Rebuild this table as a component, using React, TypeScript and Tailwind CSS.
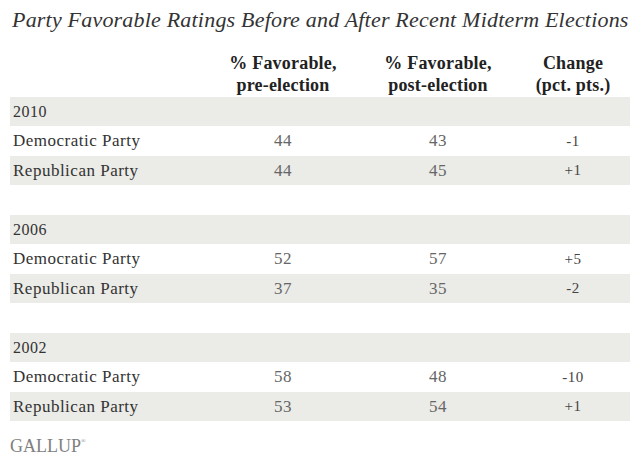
const serif = { fontFamily: '"Liberation Serif", "Times New Roman", serif' };

type Row = { party: string; pre: number; post: number; change: string };
type Section = { year: string; rows: Row[] };

const sections: Section[] = [
  {
    year: '2010',
    rows: [
      { party: 'Democratic Party', pre: 44, post: 43, change: '-1' },
      { party: 'Republican Party', pre: 44, post: 45, change: '+1' },
    ],
  },
  {
    year: '2006',
    rows: [
      { party: 'Democratic Party', pre: 52, post: 57, change: '+5' },
      { party: 'Republican Party', pre: 37, post: 35, change: '-2' },
    ],
  },
  {
    year: '2002',
    rows: [
      { party: 'Democratic Party', pre: 58, post: 48, change: '-10' },
      { party: 'Republican Party', pre: 53, post: 54, change: '+1' },
    ],
  },
];

const cols = 'grid grid-cols-[200px_146px_164px_106px_4px]';

const App = () => {
  return (
    <div className="w-[640px] h-[467px] bg-white overflow-hidden" style={serif}>
      <h1 className="pl-[12px] pt-[6px] text-[22px] italic leading-[27px] tracking-[0.2px] text-[#333]">
        Party Favorable Ratings Before and After Recent Midterm Elections
      </h1>

      <div className="ml-[10px] w-[620px] mt-[19px]">
        <div className={`${cols} h-[45px] text-[18px] font-bold leading-[22px] tracking-[0.2px] text-[#222]`}>
          <div />
          <div className="text-center">% Favorable,<br />pre-election</div>
          <div className="text-center">% Favorable,<br />post-election</div>
          <div className="text-center">Change<br />(pct. pts.)</div>
        </div>

        {sections.map((section, i) => (
          <div key={section.year} className={i > 0 ? 'mt-[30px]' : ''}>
            <div className="h-[29px] bg-[#ebebe7] flex items-center pl-[3px] text-[16px] tracking-[0.5px] text-[#333]">
              {section.year}
            </div>
            {section.rows.map((row, j) => (
              <div
                key={row.party}
                className={`${cols} items-center text-[17px] tracking-[0.5px] ${j === 1 ? 'h-[29px] bg-[#ebebe7]' : 'h-[30px] bg-white'}`}
              >
                <div className="pl-[3px] text-[#333]">{row.party}</div>
                <div className="text-center text-[#666]">{row.pre}</div>
                <div className="text-center text-[#666]">{row.post}</div>
                <div className="text-center text-[15px] text-[#444]">{row.change}</div>
              </div>
            ))}
          </div>
        ))}
      </div>

      <div className="pl-[10px] mt-[16px] flex items-start text-[18px] leading-none text-[#808080]">
        GALLUP<span className="text-[6px] mt-[1px]">®</span>
      </div>
    </div>
  );
};

export default App;
